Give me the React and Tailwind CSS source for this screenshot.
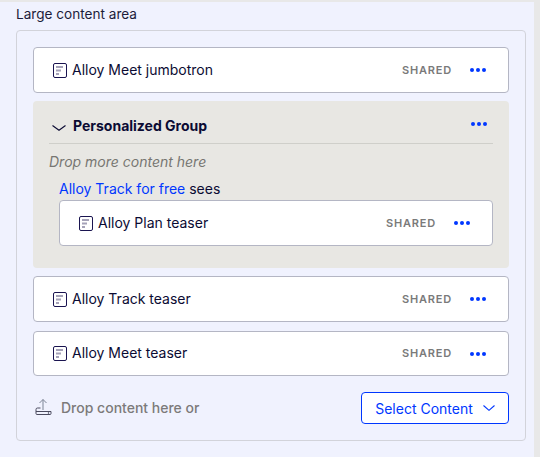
function BlockIcon() {
  return (
    <svg width="14" height="15" viewBox="0 0 14 15" fill="none" className="shrink-0">
      <rect x="0.5" y="0.5" width="13" height="14" rx="1.5" stroke="#1a1450" />
      <path d="M3 4h7M3 7.500h5M3 11h3" stroke="#a5a2b8" strokeWidth="2" />
    </svg>
  );
}

function Chevron({ width, height, color }) {
  return (
    <svg width={width} height={height} viewBox={`0 0 ${width} ${height}`} fill="none" stroke={color} strokeWidth="1.100" className="shrink-0">
      <path d={`M0.500 0.500 ${width / 2} ${height - 0.7} ${width - 0.5} 0.500`} />
    </svg>
  );
}

function Dots({ className = "" }) {
  return (
    <div className={"flex gap-[2px] " + className}>
      <span className="w-[4px] h-[4px] rounded-full bg-[#0037ff]" />
      <span className="w-[4px] h-[4px] rounded-full bg-[#0037ff]" />
      <span className="w-[4px] h-[4px] rounded-full bg-[#0037ff]" />
    </div>
  );
}

function ContentCard({ title, className = "" }) {
  return (
    <div className={"flex items-center bg-white border border-[#b4b6c4] rounded-[4px] pl-[19px] pr-[22px] " + className}>
      <BlockIcon />
      <span className="ml-[5px] text-[14px] text-[#0b0b33] -translate-y-px">{title}</span>
      <span className="ml-auto text-[11px] font-semibold tracking-[0.8px] text-[#7a7a7a]">SHARED</span>
      <Dots className="ml-[18px]" />
    </div>
  );
}

function App() {
  return (
    <div className="w-[540px] h-[460px] bg-white font-['Inter',sans-serif]">
      <div className="w-[540px] h-[457px] pt-[2px] bg-[#e8e8e8] pr-[6px]">
        <div className="h-[455px] bg-[#f0f2fe] px-[16px]">
          <div className="h-[28px] pt-[3px] text-[13.600px] leading-[18px] text-[#1c1c3a]">Large content area</div>
          <div className="h-[411px] w-[510px] border border-[#d2d3da] rounded-[4px] px-[16px] pt-[16px]">
            <ContentCard title="Alloy Meet jumbotron" className="h-[46px]" />

            <div className="h-[167px] mt-[8px] bg-[#e8e7e3] rounded-[4px] px-[16px] pt-[10px]">
              <div className="h-[33px] flex items-center border-b border-[#cfcfca] pb-[1px]">
                <span className="ml-[3px] mt-[3px] flex">
                  <Chevron width={14} height={6} color="#0b0b33" />
                </span>
                <span className="ml-[7px] text-[14px] font-bold text-[#0b0b33] -translate-y-px">Personalized Group</span>
                <Dots className="ml-auto mr-[6px] mb-[6px]" />
              </div>
              <div className="mt-[8px] text-[14px] leading-[20px] italic text-[#777672]">Drop more content here</div>
              <div className="mt-[7px] ml-[10px] text-[14px] leading-[20px] text-[#0b0b33]">
                <span className="text-[#0037ff]">Alloy Track for free</span> sees
              </div>
              <ContentCard title="Alloy Plan teaser" className="h-[46px] ml-[10px] mt-[1px]" />
            </div>

            <ContentCard title="Alloy Track teaser" className="h-[46px] mt-[8px]" />
            <ContentCard title="Alloy Meet teaser" className="h-[45px] mt-[9px]" />

            <div className="mt-[16px] flex items-center h-[32px] pl-[1px]">
              <svg width="18" height="18" viewBox="0 0 18 18" fill="none" stroke="#4a4a5e" strokeWidth="1" className="shrink-0 -translate-y-px">
                <path d="M9 1.500V12M5.500 5 9 1.500 12.500 5" stroke="#7d8596" />
                <path d="M6.500 10H3.500Q2 10 2 11.500V15.500Q2 16.500 3 16.500H16Q17 16.500 17 15.500V13.500H2" />
                <circle cx="14.500" cy="15" r="0.400" />
              </svg>
              <span className="ml-[9px] -translate-y-[1px] text-[14px] font-medium text-[#7c7a7a]">Drop content here or</span>
              <button className="ml-auto w-[148px] h-[32px] flex items-center justify-center gap-[10px] bg-white border border-[#0037ff] rounded-[4px] text-[14px] text-[#0037ff]">
                Select Content
                <Chevron width={12} height={6} color="#0037ff" />
              </button>
            </div>
          </div>
        </div>
      </div>
    </div>
  );
}

export default App;
